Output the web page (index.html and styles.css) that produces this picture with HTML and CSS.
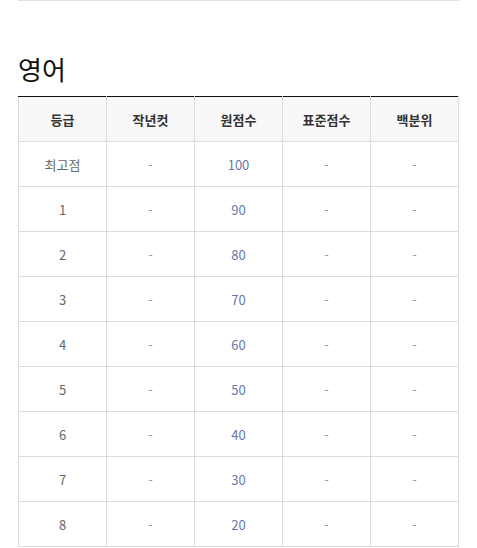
FILE: index.html
```html
<!DOCTYPE html>
<html lang="ko">
<head>
<meta charset="utf-8">
<link rel="stylesheet" href="styles.css">
</head>
<body>
<div class="wrap">
  <div class="divider"></div>
  <h2 class="title">영어</h2>
  <table class="grade">
    <thead>
      <tr><th>등급</th><th>작년컷</th><th>원점수</th><th>표준점수</th><th>백분위</th></tr>
    </thead>
    <tbody>
      <tr><td>최고점</td><td class="dash">-</td><td class="raw">100</td><td class="dash">-</td><td class="dash">-</td></tr>
      <tr><td>1</td><td class="dash">-</td><td class="raw">90</td><td class="dash">-</td><td class="dash">-</td></tr>
      <tr><td>2</td><td class="dash">-</td><td class="raw">80</td><td class="dash">-</td><td class="dash">-</td></tr>
      <tr><td>3</td><td class="dash">-</td><td class="raw">70</td><td class="dash">-</td><td class="dash">-</td></tr>
      <tr><td>4</td><td class="dash">-</td><td class="raw">60</td><td class="dash">-</td><td class="dash">-</td></tr>
      <tr><td>5</td><td class="dash">-</td><td class="raw">50</td><td class="dash">-</td><td class="dash">-</td></tr>
      <tr><td>6</td><td class="dash">-</td><td class="raw">40</td><td class="dash">-</td><td class="dash">-</td></tr>
      <tr><td>7</td><td class="dash">-</td><td class="raw">30</td><td class="dash">-</td><td class="dash">-</td></tr>
      <tr><td>8</td><td class="dash">-</td><td class="raw">20</td><td class="dash">-</td><td class="dash">-</td></tr>
    </tbody>
  </table>
</div>
</body>
</html>
```
FILE: styles.css
```css
html, body {
  margin: 0;
  padding: 0;
  background: #fff;
}
body {
  font-family: "Noto Sans CJK KR", "Noto Sans", sans-serif;
  color: #333;
}
.wrap {
  width: 441px;
  margin: 0 0 0 18px;
}
.divider {
  height: 1px;
  background: #e2e2e2;
}
.title {
  margin: 0;
  padding-top: 48px;
  height: 47px;
  font-size: 26px;
  font-weight: 400;
  line-height: 40px;
  color: #111;
  letter-spacing: 0;
}
.grade {
  width: 441px;
  border-collapse: collapse;
  table-layout: fixed;
  border-top: 1px solid #111;
}
.grade th,
.grade td {
  height: 44px;
  padding: 0;
  border: 1px solid #dcdcdc;
  text-align: center;
  vertical-align: middle;
  font-size: 13px;
}
.grade thead th {
  border-top: 1px solid #111;
  background: #f8f8f8;
  font-weight: 700;
  color: #333;
}
.grade td {
  color: #666;
}
.grade td.dash {
  color: #999;
}
.grade td.raw {
  color: #6677aa;
}
```
